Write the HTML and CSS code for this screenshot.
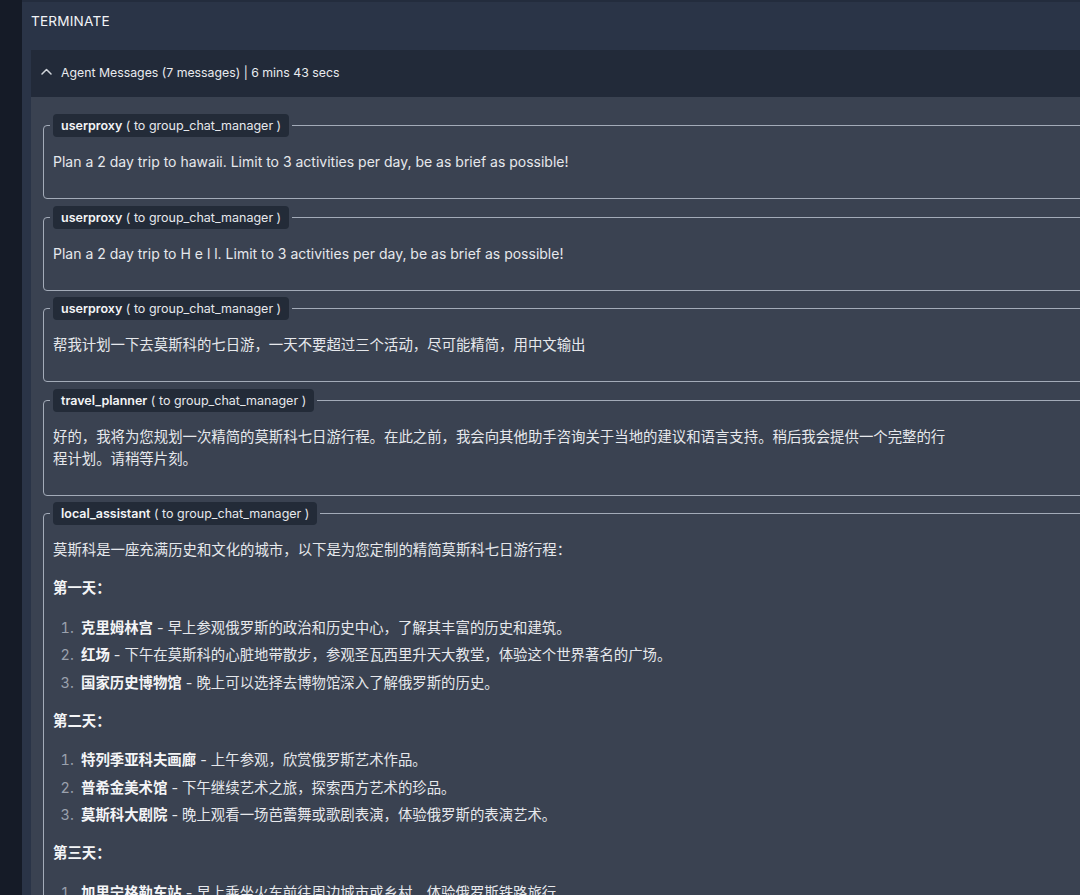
FILE: index.html
```html
<!DOCTYPE html>
<html lang="zh">
<head>
    <meta charset="UTF-8">
    <meta name="viewport" content="width=device-width, initial-scale=1.0">
    <title>Agent Messages</title>
    <link rel="stylesheet" href="styles.css">
</head>
<body>
    <div class="sidebar"></div>
    <div class="main">
        <div class="result">TERMINATE</div>
        <div class="agent-box">
            <div class="agent-head">
                <svg class="chevron" width="11" height="7" viewBox="0 0 11 7"><path d="M1 6 L5.5 1.5 L10 6" fill="none" stroke="#d1d5db" stroke-width="1.5" stroke-linecap="round" stroke-linejoin="round"/></svg>
                <span>Agent Messages (7 messages) | 6 mins 43 secs</span>
            </div>
            <div class="agent-body">
                <fieldset class="msg">
                    <legend><span class="tag"><b>userproxy</b> ( to group_chat_manager )</span></legend>
                    <div class="msg-body">
                        <p class="en">Plan a 2 day trip to hawaii. Limit to 3 activities per day, be as brief as possible!</p>
                    </div>
                </fieldset>
                <fieldset class="msg">
                    <legend><span class="tag"><b>userproxy</b> ( to group_chat_manager )</span></legend>
                    <div class="msg-body">
                        <p class="en">Plan a 2 day trip to H e l l. Limit to 3 activities per day, be as brief as possible!</p>
                    </div>
                </fieldset>
                <fieldset class="msg">
                    <legend><span class="tag"><b>userproxy</b> ( to group_chat_manager )</span></legend>
                    <div class="msg-body">
                        <p>帮我计划一下去莫斯科的七日游，一天不要超过三个活动，尽可能精简，用中文输出</p>
                    </div>
                </fieldset>
                <fieldset class="msg">
                    <legend><span class="tag"><b>travel_planner</b> ( to group_chat_manager )</span></legend>
                    <div class="msg-body">
                        <p>好的，我将为您规划一次精简的莫斯科七日游行程。在此之前，我会向其他助手咨询关于当地的建议和语言支持。稍后我会提供一个完整的行程计划。请稍等片刻。</p>
                    </div>
                </fieldset>
                <fieldset class="msg">
                    <legend><span class="tag"><b>local_assistant</b> ( to group_chat_manager )</span></legend>
                    <div class="msg-body">
                        <p>莫斯科是一座充满历史和文化的城市，以下是为您定制的精简莫斯科七日游行程：</p>
                        <p class="day"><b>第一天：</b></p>
                        <ol>
                            <li><b>克里姆林宫</b> - 早上参观俄罗斯的政治和历史中心，了解其丰富的历史和建筑。</li>
                            <li><b>红场</b> - 下午在莫斯科的心脏地带散步，参观圣瓦西里升天大教堂，体验这个世界著名的广场。</li>
                            <li><b>国家历史博物馆</b> - 晚上可以选择去博物馆深入了解俄罗斯的历史。</li>
                        </ol>
                        <p class="day"><b>第二天：</b></p>
                        <ol>
                            <li><b>特列季亚科夫画廊</b> - 上午参观，欣赏俄罗斯艺术作品。</li>
                            <li><b>普希金美术馆</b> - 下午继续艺术之旅，探索西方艺术的珍品。</li>
                            <li><b>莫斯科大剧院</b> - 晚上观看一场芭蕾舞或歌剧表演，体验俄罗斯的表演艺术。</li>
                        </ol>
                        <p class="day"><b>第三天：</b></p>
                        <ol>
                            <li><b>加里宁格勒车站</b> - 早上乘坐火车前往周边城市或乡村，体验俄罗斯铁路旅行。</li>
                            <li><b>谢尔吉耶夫镇</b> - 参观圣三一修道院，感受俄罗斯东正教文化。</li>
                        </ol>
                    </div>
                </fieldset>
            </div>
        </div>
    </div>
</body>
</html>
```

FILE: styles.css
```css
html, body {
    margin: 0;
    height: 100%;
    overflow: hidden;
}
body {
    font-family: 'Inter', 'Noto Sans CJK SC', sans-serif;
    display: flex;
    background: #151b27;
    color: #e6e8ec;
}
.sidebar {
    width: 22px;
    flex-shrink: 0;
    background: #151b27;
}
.main {
    flex: 1;
    background: #2a3447;
    border-top: 2px solid #232c3d;
    padding-left: 9px;
    overflow: hidden;
}
.result {
    height: 48px;
    line-height: 38px;
    font-size: 13.6px;
    letter-spacing: 0.2px;
    color: #f1f3f6;
}
.agent-box {
    width: 1150px;
    background: #3a4251;
    min-height: 900px;
}
.agent-head {
    height: 44px;
    padding: 0 0 3px 10px;
    background: #222a39;
    display: flex;
    align-items: center;
    gap: 9px;
    font-size: 12.3px;
    color: #e9ebef;
}
.chevron {
    margin-top: -1px;
}
.agent-body {
    padding: 17px 0 0 12px;
}
.msg {
    border: 1px solid #a3abb8;
    border-radius: 4px;
    margin: 0 0 6.5px;
    padding: 0 0 0 6px;
    min-width: 0;
}
.msg legend {
    padding: 0 3px;
}
.tag {
    display: block;
    background: #232b38;
    border-radius: 4px;
    padding: 0 8px;
    height: 23px;
    line-height: 23px;
    font-size: 12.5px;
    color: #e6e8ec;
}
.tag b {
    font-weight: 600;
    color: #f3f4f6;
}
.msg-body {
    padding: 14px 0 25px 3px;
    font-size: 14.4px;
    line-height: 22px;
}
.msg-body p {
    margin: 0;
    max-width: 900px;
}
.msg-body p.en {
    font-size: 14px;
}
.msg-body p.day {
    margin-top: 16px;
}
.msg-body ol {
    margin: 17.5px 0 15px;
    padding-left: 28px;
}
.msg-body li {
    margin-bottom: 5.5px;
}
.msg-body li::marker {
    content: counter(list-item) ".\2002";
    color: #9aa1ad;
}
.msg-body b {
    font-weight: 700;
    color: #f4f5f7;
}
```
